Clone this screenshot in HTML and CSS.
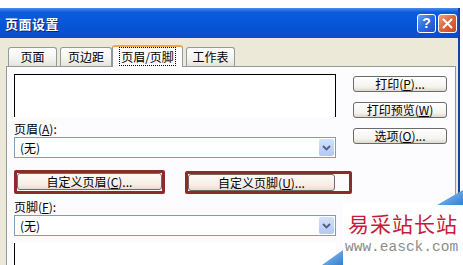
FILE: index.html
```html
<!DOCTYPE html>
<html lang="zh-CN">
<head>
    <meta charset="UTF-8">
    <title>页面设置</title>
    <link rel="stylesheet" href="styles.css">
</head>
<body>

    <div class="window">
        <div class="titlebar">
            <span class="title">页面设置</span>
            <div class="caption-btns">
                <span class="cap help">?</span>
                <span class="cap close">
                    <svg width="11" height="11" viewBox="0 0 11 11"><path d="M1.5 1.5 L9.5 9.5 M9.5 1.5 L1.5 9.5" stroke="#fff" stroke-width="2" stroke-linecap="round"/></svg>
                </span>
            </div>
        </div>

        <div class="client">
            <div class="tabs">
                <div class="tab tab-page">页面</div>
                <div class="tab tab-margin">页边距</div>
                <div class="tab tab-active"><span class="focus">页眉/页脚</span></div>
                <div class="tab tab-sheet">工作表</div>
            </div>

            <div class="panel">
                <div class="left-col">
                    <div class="preview"></div>

                    <div class="field-label">页眉(<u>A</u>):</div>
                    <div class="combo">
                        <span>(无)</span>
                        <span class="drop">
                            <svg width="9" height="6" viewBox="0 0 9 6"><path d="M1 1 L4.5 4.5 L8 1" fill="none" stroke="#4d6185" stroke-width="1.8"/></svg>
                        </span>
                    </div>

                    <div class="custom-row">
                        <div class="mark mark-header">
                            <button class="btn">自定义页眉(<u>C</u>)...</button>
                        </div>
                        <div class="mark mark-footer">
                            <button class="btn">自定义页脚(<u>U</u>)...</button>
                        </div>
                    </div>

                    <div class="field-label field-footer">页脚(<u>F</u>):</div>
                    <div class="combo">
                        <span>(无)</span>
                        <span class="drop">
                            <svg width="9" height="6" viewBox="0 0 9 6"><path d="M1 1 L4.5 4.5 L8 1" fill="none" stroke="#4d6185" stroke-width="1.8"/></svg>
                        </span>
                    </div>

                    <div class="preview preview-footer"></div>
                </div>

                <div class="right-col">
                    <button class="btn">打印(<u>P</u>)...</button>
                    <button class="btn">打印预览(<u>W</u>)</button>
                    <button class="btn">选项(<u>O</u>)...</button>
                </div>
            </div>
        </div>
    </div>

    <!-- site watermark pasted over the screenshot -->
    <div class="watermark">
        <svg class="wm-shape" width="143" height="77" viewBox="0 0 143 77">
            <defs>
                <linearGradient id="wmblue" x1="0" y1="0" x2="1" y2="1">
                    <stop offset="0" stop-color="#9cc6ee"/>
                    <stop offset="1" stop-color="#2f7fd6"/>
                </linearGradient>
            </defs>
            <rect x="23" y="14" width="120" height="63" fill="#fff"/>
            <polygon points="117,17 143,2 143,17" fill="url(#wmblue)"/>
            <polygon points="2,77 23,62 23,77" fill="url(#wmblue)"/>
        </svg>
        <div class="wm-name">易采站长站</div>
        <div class="wm-url">www.easck.com</div>
    </div>

</body>
</html>
```

FILE: styles.css
```css
body {
    margin: 0;
    width: 463px;
    height: 265px;
    overflow: hidden;
    position: relative;
    background-color: #fff;
    font-family: "Noto Sans CJK SC", sans-serif;
    font-size: 12px;
    color: #000;
}

u {
    text-decoration: underline;
    text-underline-offset: 1px;
}

.window {
    margin-top: 8px;
    width: 458px;
    height: 257px;
    border-right: 2px solid #1c3fa6;
    background-color: #ece9d8;
    display: flex;
    flex-direction: column;
}

.titlebar {
    flex: none;
    height: 30px;
    display: flex;
    align-items: center;
    justify-content: space-between;
    background: linear-gradient(to bottom, #4a8cf0 0%, #0b5bdb 14%, #0655d7 60%, #0a4cc9 100%);
}

.title {
    padding-left: 5px;
    color: #fff;
    font-weight: bold;
    font-size: 13px;
    letter-spacing: 0.5px;
    text-shadow: 1px 1px 0 #0a237a;
}

.caption-btns {
    display: flex;
    gap: 2px;
    margin-right: 1px;
}

.cap {
    width: 17px;
    height: 17px;
    border: 1px solid #fff;
    border-radius: 3px;
    display: flex;
    align-items: center;
    justify-content: center;
    color: #fff;
    font-weight: bold;
    font-size: 14px;
    line-height: 1;
    font-family: "Liberation Sans", sans-serif;
}

.help {
    background: linear-gradient(135deg, #6d9ff5 0%, #2e68e3 50%, #1e50c8 100%);
}

.close {
    background: linear-gradient(135deg, #f0a07a 0%, #e0653a 50%, #c9461f 100%);
}

.client {
    flex: 1;
    display: flex;
    flex-direction: column;
    padding: 6px 2px 0 6px;
}

.tabs {
    display: flex;
    align-items: flex-end;
    height: 22px;
    padding-left: 2px;
}

.tab {
    box-sizing: border-box;
    height: 19px;
    border: 1px solid #919b9c;
    border-bottom: none;
    border-radius: 3px 3px 0 0;
    background: linear-gradient(to bottom, #ffffff, #f3f3ef 60%, #e4e2da);
    text-align: center;
    line-height: 18px;
}

.tab-page {
    width: 49px;
    margin-right: 3px;
}

.tab-margin {
    width: 52px;
}

.tab-active {
    width: 71px;
    height: 22px;
    margin-bottom: -1px;
    border-top: 2px solid #f2a540;
    background: #fcfcfe;
    line-height: 19px;
    position: relative;
}

.focus {
    outline: 1px dotted #000;
    padding: 0 1px;
}

.tab-sheet {
    width: 49px;
    margin-left: 3px;
}

.panel {
    flex: 1;
    display: flex;
    border: 1px solid #919b9c;
    border-bottom: none;
    background-color: #fcfcfe;
    padding: 7px 0 0 7px;
}

.left-col {
    width: 322px;
    display: flex;
    flex-direction: column;
}

.preview {
    height: 42px;
    border: 1px solid #000;
    border-bottom: none;
    background-color: #fff;
}

.preview-footer {
    margin-top: 7px;
    height: 30px;
    border-right: none;
    border-top: none;
}

.field-label {
    margin-top: 4px;
    height: 16px;
    line-height: 16px;
}

.field-footer {
    margin-top: 5px;
}

.combo {
    box-sizing: border-box;
    height: 21px;
    border: 1px solid #7f9db9;
    background-color: #fff;
    display: flex;
    align-items: center;
    justify-content: space-between;
    padding-left: 5px;
}

.drop {
    width: 15px;
    height: 17px;
    margin-right: 1px;
    border-radius: 2px;
    background: linear-gradient(to bottom, #d4e0fc, #b3c8f6);
    display: flex;
    align-items: center;
    justify-content: center;
}

.custom-row {
    display: flex;
    gap: 20px;
    margin-top: 12px;
    width: 340px;
}

.mark {
    border: 3px solid #8e2a2a;
    border-radius: 2px;
    display: flex;
}

.mark-header {
    width: 145px;
}

.mark-footer {
    width: 147px;
    padding-right: 14px;
    margin-top: 1px;
}

.btn {
    box-sizing: border-box;
    height: 17px;
    width: 100%;
    padding: 0;
    border: 1px solid #6b6b6b;
    border-radius: 3px;
    background: linear-gradient(to bottom, #ffffff, #f4f3ee 70%, #dcd8cc);
    font-family: "Noto Sans CJK SC", sans-serif;
    font-size: 12px;
    line-height: 15px;
    color: #000;
}

.mark .btn {
    background: linear-gradient(to bottom, #fffaf6, #f6eee6 70%, #e8dcd0);
}

.right-col {
    margin-left: 17px;
    margin-top: 2px;
    width: 94px;
    display: flex;
    flex-direction: column;
    gap: 10px;
}

.right-col .btn {
    height: 16px;
    line-height: 14px;
}

.watermark {
    position: absolute;
    left: 320px;
    top: 188px;
    width: 143px;
    height: 77px;
}

.wm-shape {
    position: absolute;
    left: 0;
    top: 0;
}

.wm-name {
    position: relative;
    margin: 24px 0 0 28px;
    height: 22px;
    line-height: 22px;
    font-size: 21px;
    color: #c8193c;
    letter-spacing: 1px;
}

.wm-url {
    position: relative;
    margin: 5px 0 0 25px;
    height: 16px;
    font-family: "Liberation Mono", monospace;
    font-size: 14.5px;
    line-height: 16px;
    color: #8c8c8c;
}
```
